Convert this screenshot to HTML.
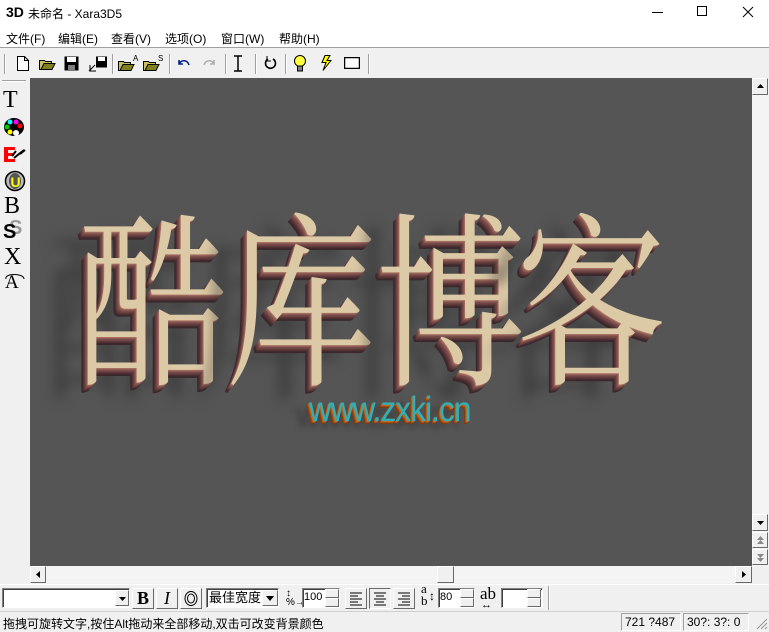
<!DOCTYPE html>
<html><head><meta charset="utf-8"><style>
*{margin:0;padding:0;box-sizing:border-box}
body{width:769px;height:631px;background:#f0f0f0;font-family:"Liberation Sans","Noto Sans CJK SC",sans-serif;font-size:12px;position:relative;overflow:hidden;color:#000}
.abs{position:absolute}
#title{left:0;top:0;width:769px;height:26px;background:#fff}
#menu{left:0;top:26px;width:769px;height:21px;background:#fff}
#menu span{position:absolute;top:4px;font-size:12px}
#tb{left:0;top:47px;width:769px;height:31px;background:#f0f0f0;border-top:1px solid #a0a0a0}
.sep{position:absolute;top:6px;width:2px;height:20px;border-left:1px solid #a0a0a0;border-right:1px solid #fff}
#canvas{left:30px;top:78px;width:722px;height:488px;background:#555;overflow:hidden}
.ch{position:absolute;font-family:"Noto Serif CJK SC","WenQuanYi Zen Hei",serif;font-size:188px;line-height:1;color:#dcc9a6;transform:scaleX(.8);transform-origin:left top;
text-shadow:-1px 1px 0 #a86e60,-2px 2px 0 #8a5c55,-3px 3px 0 #7a4c48,-4px 4px 0 #6e4342,-5px 5px 0 #5e3a3a,-6px 6px 0 #4e3034,-7px 7px 0 #3e2a2e,-8px 8px 0 #3a282c,-40px 14px 14px rgba(40,40,40,.55)}
.btn{position:absolute;background:#f0f0f0;border:1px solid;border-color:#fff #696969 #696969 #fff}
.fld{position:absolute;background:#fff;border:1px solid;border-color:#808080 #fff #fff #808080;box-shadow:inset 1px 1px 0 #404040}
</style></head><body>
<div id="title" class="abs">
 <span class="abs" style="left:6px;top:4px;font-weight:bold;font-size:14px;font-family:'Liberation Sans'">3D</span>
 <span class="abs" style="left:28px;top:5px;font-size:12px">未命名 - Xara3D5</span>
 <div class="abs" style="left:652px;top:12px;width:11px;height:1px;background:#000"></div>
 <div class="abs" style="left:697px;top:6px;width:10px;height:10px;border:1px solid #000"></div>
 <svg class="abs" style="left:742px;top:6px" width="12" height="12"><path d="M1 1L11 11M11 1L1 11" stroke="#000" stroke-width="1"/></svg>
</div>
<div id="menu" class="abs">
 <span style="left:6px">文件(F)</span><span style="left:58px">编辑(E)</span><span style="left:111px">查看(V)</span><span style="left:165px">选项(O)</span><span style="left:221px">窗口(W)</span><span style="left:279px">帮助(H)</span>
</div>
<div id="tb" class="abs">
 <div class="sep" style="left:4px"></div>
 <svg class="abs" style="left:16px;top:8px" width="14" height="15"><path d="M1.5 .5h7l4 4v10h-11z M8.5 .5v4h4" fill="#fff" stroke="#000"/></svg>
 <svg class="abs" style="left:39px;top:9px" width="17" height="13"><path d="M.5 3.5h5l1 1h6v8h-12z" fill="#c8c060" stroke="#000"/><path d="M2 12.5l3-6h11l-3 6z" fill="#808020" stroke="#000"/></svg>
 <svg class="abs" style="left:64px;top:8px" width="15" height="15"><rect x=".5" y=".5" width="14" height="14" fill="#000"/><rect x="3" y="1" width="9" height="5" fill="#fff"/><rect x="4" y="9" width="7" height="5" fill="#808080"/></svg>
 <svg class="abs" style="left:88px;top:8px" width="20" height="16"><rect x="8" y=".5" width="11" height="11" fill="#000"/><rect x="10" y="1" width="7" height="4" fill="#fff"/><path d="M1 15l6-6M2 9v6h6" stroke="#000" fill="none"/></svg>
 <div class="sep" style="left:112px"></div>
 <svg class="abs" style="left:118px;top:6px" width="22" height="18"><path d="M.5 7.5h5l1 1h6v8h-12z" fill="#c8c060" stroke="#000"/><path d="M2 16.5l3-6h11l-3 6z" fill="#808020" stroke="#000"/><text x="15" y="7" font-size="8" font-family="Liberation Sans">A</text></svg>
 <svg class="abs" style="left:143px;top:6px" width="22" height="18"><path d="M.5 7.5h5l1 1h6v8h-12z" fill="#c8c060" stroke="#000"/><path d="M2 16.5l3-6h11l-3 6z" fill="#808020" stroke="#000"/><text x="15" y="7" font-size="8" font-family="Liberation Sans">S</text></svg>
 <div class="sep" style="left:169px"></div>
 <svg class="abs" style="left:177px;top:10px" width="14" height="10"><path d="M2 2v4h4M2 6c2-4 8-5 10 1" stroke="#00208a" stroke-width="1.6" fill="none"/></svg>
 <svg class="abs" style="left:202px;top:10px" width="14" height="10"><path d="M12 2v4h-4M12 6c-2-4-8-5-10 1" stroke="#b0b0b0" stroke-width="1.6" fill="none"/></svg>
 <div class="sep" style="left:225px"></div>
 <svg class="abs" style="left:233px;top:7px" width="10" height="17"><path d="M1 1h8M1 16h8M5 1v15" stroke="#000" stroke-width="1.5"/></svg>
 <div class="sep" style="left:255px"></div>
 <svg class="abs" style="left:264px;top:8px" width="13" height="14"><path d="M4 3a5 5 0 1 0 5 0" stroke="#000" stroke-width="1.6" fill="none"/><path d="M3 0v5h4" stroke="#000" fill="none"/></svg>
 <div class="sep" style="left:285px"></div>
 <svg class="abs" style="left:293px;top:7px" width="14" height="17"><circle cx="7" cy="6" r="5.5" fill="#ffff40" stroke="#000"/><rect x="4.5" y="11" width="5" height="5" fill="#808080" stroke="#000"/></svg>
 <svg class="abs" style="left:320px;top:7px" width="12" height="17"><path d="M5 .5l-3 7h4l-3 8 8-10h-4l3-5z" fill="#ffff00" stroke="#000"/></svg>
 <svg class="abs" style="left:344px;top:9px" width="16" height="12"><rect x=".5" y=".5" width="15" height="11" fill="#fff" stroke="#000" stroke-width="1.5"/></svg>
 <div class="sep" style="left:368px"></div>
</div>
<div class="abs" style="left:0;top:78px;width:30px;height:488px;background:#f0f0f0">
 <div class="abs" style="left:2px;top:2px;width:24px;height:2px;border-top:1px solid #a0a0a0;border-bottom:1px solid #fff"></div>
 <div class="abs" style="left:3px;top:10px;font-family:'Liberation Serif';font-size:24px;line-height:1">T</div>
 <svg class="abs" style="left:3px;top:39px" width="22" height="20"><ellipse cx="11" cy="10" rx="10" ry="9" fill="#000"/><circle cx="7" cy="5" r="2.5" fill="#0ff"/><circle cx="13" cy="5" r="2.5" fill="#f0f"/><circle cx="17" cy="9" r="2.5" fill="#f00"/><circle cx="4" cy="10" r="2.5" fill="#0c0"/><circle cx="7" cy="15" r="2.5" fill="#ff0"/><circle cx="13" cy="16" r="3" fill="#fff"/></svg>
 <svg class="abs" style="left:3px;top:66px" width="24" height="20"><path d="M1 3h11v3H5v3h6v3H5v3h7v3H1z" fill="#f00"/><path d="M11 14l10-8M9 12l4-5M17 10l5-4" stroke="#000" stroke-width="2"/></svg>
 <svg class="abs" style="left:4px;top:92px" width="22" height="22"><circle cx="11" cy="11" r="9.5" fill="#bbb" stroke="#000" stroke-width="1.5"/><ellipse cx="11" cy="11" rx="6" ry="8" fill="#555"/><text x="6.5" y="17" font-size="14" font-weight="bold" fill="#ff0" font-family="Liberation Sans">U</text></svg>
 <div class="abs" style="left:4px;top:116px;font-family:'Liberation Serif';font-size:24px;line-height:1">B</div>
 <div class="abs" style="left:9px;top:140px;font-family:'Liberation Sans';font-weight:bold;font-size:20px;line-height:1;color:#999">S</div>
 <div class="abs" style="left:3px;top:144px;font-family:'Liberation Sans';font-weight:bold;font-size:20px;line-height:1;color:#000">S</div>
 <div class="abs" style="left:4px;top:167px;font-family:'Liberation Serif';font-size:24px;line-height:1">X</div>
 <div class="abs" style="left:5px;top:195px;font-family:'Liberation Serif';font-size:19px;line-height:1">A</div>
 <svg class="abs" style="left:3px;top:193px" width="24" height="10"><path d="M3 8c-2-6 18-6 18 0" stroke="#000" fill="none"/></svg>
</div>
<div id="canvas" class="abs">
 <div class="ch" style="left:48px;top:118px">酷</div>
 <div class="ch" style="left:196px;top:118px">库</div>
 <div class="ch" style="left:346px;top:118px">博</div>
 <div class="ch" style="left:486px;top:118px">客</div>
 <div class="abs" style="left:279px;top:314px;font-family:'Liberation Sans Narrow','Liberation Sans';font-size:35px;line-height:1;color:#2fb0b8;transform:scaleX(.9);transform-origin:left;text-shadow:-1px 1px 0 #c46a20,-2px 2px 0 #a05018,-3px 3px 0 #803a10,-14px 6px 6px rgba(30,30,30,.5);letter-spacing:-1px">www.zxki.cn</div>
</div>
<div class="abs" style="left:752px;top:78px;width:17px;height:488px;background:#f4f4f4"></div>
<div class="btn" style="left:752px;top:78px;width:16px;height:17px"><svg width="14" height="15"><path d="M4 9h7l-3.5-4z" fill="#000"/></svg></div>
<div class="btn" style="left:752px;top:514px;width:16px;height:17px"><svg width="14" height="15"><path d="M4 6h7l-3.5 4z" fill="#000"/></svg></div>
<div class="btn" style="left:752px;top:532px;width:16px;height:16px"><svg width="14" height="14"><path d="M4 7h7l-3.5-4zM4 11h7l-3.5-4z" fill="#888"/></svg></div>
<div class="btn" style="left:752px;top:549px;width:16px;height:16px"><svg width="14" height="14"><path d="M4 4h7l-3.5 4zM4 8h7l-3.5 4z" fill="#888"/></svg></div>
<div class="abs" style="left:30px;top:566px;width:722px;height:17px;background:#f4f4f4"></div>
<div class="btn" style="left:30px;top:566px;width:16px;height:17px"><svg width="14" height="15"><path d="M9 4v7l-4-3.5z" fill="#000"/></svg></div>
<div class="btn" style="left:437px;top:566px;width:17px;height:17px"></div>
<div class="btn" style="left:735px;top:566px;width:17px;height:17px"><svg width="14" height="15"><path d="M6 4v7l4-3.5z" fill="#000"/></svg></div>
<div class="abs" style="left:0;top:584px;width:769px;height:1px;background:#fff"></div>
<div class="fld" style="left:2px;top:588px;width:128px;height:20px"></div>
<div class="btn" style="left:115px;top:590px;width:14px;height:16px"><svg width="12" height="14"><path d="M3 6h7l-3.5 4z" fill="#000"/></svg></div>
<div class="btn" style="left:132px;top:588px;width:22px;height:21px;font-family:'Liberation Serif';font-weight:bold;font-size:18px;text-align:center;line-height:19px">B</div>
<div class="btn" style="left:156px;top:588px;width:22px;height:21px;font-family:'Liberation Serif';font-style:italic;font-size:18px;text-align:center;line-height:19px">I</div>
<div class="btn" style="left:180px;top:588px;width:22px;height:21px"><svg width="20" height="19"><ellipse cx="10" cy="9.5" rx="6" ry="7" fill="none" stroke="#000"/><ellipse cx="10" cy="9.5" rx="3.5" ry="4.5" fill="none" stroke="#000"/></svg></div>
<div class="fld" style="left:206px;top:588px;width:73px;height:20px;font-size:13px;padding:1px 2px;line-height:16px">最佳宽度</div>
<div class="btn" style="left:262px;top:590px;width:16px;height:16px"><svg width="14" height="14"><path d="M3 5h8l-4 5z" fill="#000"/></svg></div>
<div class="abs" style="left:286px;top:589px;font-size:10px;line-height:9px;font-family:'Liberation Sans'">↕<br>%→</div>
<div class="fld" style="left:302px;top:588px;width:38px;height:20px;font-size:11px;line-height:17px;padding-left:1px">100</div>
<div class="btn" style="left:325px;top:589px;width:14px;height:9px"></div><div class="btn" style="left:325px;top:598px;width:14px;height:9px"></div>
<div class="btn" style="left:345px;top:588px;width:22px;height:21px"><svg width="20" height="19"><path d="M4 4h12M4 7h8M4 10h12M4 13h8M4 16h12" stroke="#000"/></svg></div>
<div class="btn" style="left:369px;top:588px;width:22px;height:21px;border-color:#696969 #fff #fff #696969"><svg width="20" height="19"><path d="M4 4h12M6 7h8M4 10h12M6 13h8M4 16h12" stroke="#000"/></svg></div>
<div class="btn" style="left:393px;top:588px;width:22px;height:21px"><svg width="20" height="19"><path d="M4 4h12M8 7h8M4 10h12M8 13h8M4 16h12" stroke="#000"/></svg></div>
<div class="abs" style="left:421px;top:583px;font-family:'Liberation Serif';font-size:13px;line-height:12px">a<br>b</div>
<div class="abs" style="left:429px;top:589px;font-size:12px">↕</div>
<div class="fld" style="left:438px;top:588px;width:37px;height:20px;font-size:11px;line-height:17px;padding-left:1px">80</div>
<div class="btn" style="left:460px;top:589px;width:14px;height:9px"></div><div class="btn" style="left:460px;top:598px;width:14px;height:9px"></div>
<div class="abs" style="left:480px;top:585px;font-family:'Liberation Serif';font-size:17px;line-height:17px">ab</div>
<div class="abs" style="left:481px;top:599px;font-size:11px">↔</div>
<div class="fld" style="left:501px;top:588px;width:42px;height:20px"></div>
<div class="btn" style="left:527px;top:589px;width:14px;height:9px"></div><div class="btn" style="left:527px;top:598px;width:14px;height:9px"></div>
<div class="abs" style="left:548px;top:586px;width:2px;height:24px;border-left:1px solid #a0a0a0;border-right:1px solid #fff"></div>
<div class="abs" style="left:0;top:611px;width:769px;height:1px;background:#d0d0d0"></div>
<div class="abs" style="left:3px;top:615px;font-size:12px">拖拽可旋转文字,按住Alt拖动来全部移动,双击可改变背景颜色</div>
<div class="abs" style="left:621px;top:613px;width:60px;height:18px;border:1px solid;border-color:#a0a0a0 #fff #fff #a0a0a0;font-size:12px;padding:1px 3px">721 ?487</div>
<div class="abs" style="left:683px;top:613px;width:66px;height:18px;border:1px solid;border-color:#a0a0a0 #fff #fff #a0a0a0;font-size:12px;padding:1px 3px">30?: 3?: 0</div>
<svg class="abs" style="left:755px;top:617px" width="13" height="13"><path d="M12 2L2 12M12 6L6 12M12 10L10 12" stroke="#999"/></svg>
</body></html>
